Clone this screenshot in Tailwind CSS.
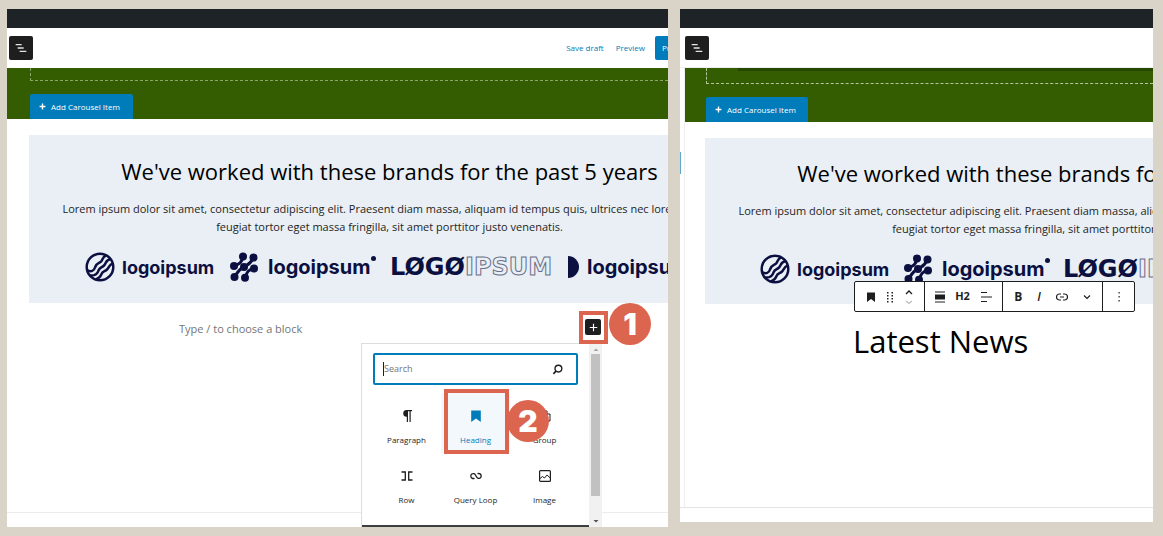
<!DOCTYPE html>
<html lang="en">
  <head>
    <meta charset="UTF-8" />
    <meta name="viewport" content="width=device-width, initial-scale=1.0" />
    <title>Add a heading block</title>
    <script src="https://cdn.jsdelivr.net/npm/@tailwindcss/browser@4"></script>
  </head>
  <body class="bg-[#dad3c8] font-['Open_Sans','Noto_Sans',sans-serif] text-[#1e1e1e]">
    <!-- Shared icons -->
    <svg class="hidden">
      <symbol id="list-view" viewBox="0 0 24 24">
        <path d="M4 7h9M7 12h9M10 17h10" fill="none" stroke="#e4e4e4" stroke-width="2" />
      </symbol>
      <symbol id="plus" viewBox="0 0 12 12">
        <path d="M6 1v10M1 6h10" fill="none" stroke="currentColor" stroke-width="2.4" />
      </symbol>
      <symbol id="bookmark" viewBox="0 0 10 10">
        <path d="M1 .500h8v9.500L5 7 1 10z" fill="currentColor" />
      </symbol>
      <symbol id="logo-waves" viewBox="0 0 30 30">
        <g fill="none" stroke="#0b1040" stroke-width="2.5">
          <circle cx="15" cy="15" r="13.300" />
          <path d="M2.500 18.500C6 20 9 19 10 15.500C11.500 11 13 11.500 15.500 10C18 8.500 17 5 21 3.500" />
          <path d="M5 23.500C10 24 12.500 22 13.500 18.500C14.500 15.500 17 15.500 19 13.500C21.500 11 20 8.500 25.500 7" />
          <path d="M10.500 27.500C14.500 26.500 15.500 24.500 16.500 22C17.500 19 20 19.500 22 17.500C24 15.500 24 12.500 28 11.500" />
        </g>
      </symbol>
      <symbol id="logo-dots" viewBox="0 0 30 30">
        <g fill="#0b1040">
          <circle cx="14" cy="4.500" r="4" />
          <circle cx="24.500" cy="5.500" r="4" />
          <circle cx="5" cy="14" r="4" />
          <circle cx="15" cy="15" r="4" />
          <circle cx="25" cy="16.500" r="4" />
          <circle cx="5.500" cy="25" r="4" />
          <circle cx="16" cy="25.800" r="4" />
        </g>
        <path d="M14 4.500C13 11 10 12 5 14M24.500 5.500C21 13 19 12 15 15C10 17 9 20 5.500 25M25 16.500C19 17.500 18 20 16 25.800" fill="none" stroke="#0b1040" stroke-width="3" />
      </symbol>
    </svg>

    <main class="grid h-screen grid-cols-[661fr_473fr] gap-3 pt-[9px] pr-[10px] pb-[9px] pl-[7px]">
      <!-- Step one: block picker -->
      <section class="relative flex min-w-0 flex-col overflow-hidden bg-white">
        <div class="h-[19px] shrink-0 bg-[#1d2327]"></div>
        <header class="flex h-10 shrink-0 items-center justify-between pl-0.5">
          <button aria-label="List view" class="flex size-6 items-center justify-center rounded-xs bg-[#1e1e1e] text-white">
            <svg class="size-4"><use href="#list-view" /></svg>
          </button>
          <div class="flex items-center gap-[10px] text-[8px] text-[#007cba]">
            <button class="mr-0.5">Save draft</button>
            <button>Preview</button>
            <button class="h-6 w-[13px] overflow-hidden rounded-l-xs bg-[#007cba] pl-[7px] text-white">Publish</button>
          </div>
        </header>
        <div class="flex h-[51px] shrink-0 flex-col justify-between bg-[#335d00] pl-[23px]">
          <div class="h-[13px] border-b border-l border-dashed border-[#8ca56b]"></div>
          <button class="flex h-[25px] w-[103px] items-center gap-[5px] rounded-t-xs bg-[#007cba] pl-[9px] text-[8px] text-white">
            <svg class="size-[7px]"><use href="#plus" /></svg>Add Carousel Item
          </button>
        </div>
        <div class="mt-4 ml-[22px] h-[168px] w-[721px] shrink-0 bg-[#e9eff5] pt-5 text-center">
          <h1 class="text-[22px] leading-8 whitespace-nowrap text-black">We've worked with these brands for the past 5 years</h1>
          <p class="mt-[13px] text-[11px] leading-[18px] whitespace-nowrap">
            Lorem ipsum dolor sit amet, consectetur adipiscing elit. Praesent diam massa, aliquam id tempus quis, ultrices nec lorem. Fusce<br />feugiat tortor eget massa fringilla, sit amet porttitor justo venenatis.
          </p>
          <div class="mt-4 flex h-[30px] items-center pl-14 font-['Inter',sans-serif] font-bold text-[#0b1040]">
            <svg class="size-[30px] shrink-0"><use href="#logo-waves" /></svg>
            <span class="ml-[7px] w-[107px] shrink-0 text-left text-[18px]">logoipsum</span>
            <svg class="size-[30px] shrink-0"><use href="#logo-dots" /></svg>
            <span class="ml-[9px] flex w-[122px] shrink-0 text-left text-[20px]">logoipsum<i class="mt-1 size-[5px] rounded-full bg-[#0b1040]"></i></span>
            <span class="flex w-[178px] shrink-0 font-['DejaVu_Sans',sans-serif] text-[24px]">LØGØ<span class="text-[#e9eff5] [-webkit-text-stroke:1px_#6a7088]">IPSUM</span></span>
            <i class="h-[22px] w-[11px] shrink-0 rounded-r-full bg-[#0b1040]"></i>
            <span class="ml-2 text-[20px]">logoipsum</span>
          </div>
        </div>
        <div class="flex h-12 shrink-0 items-center pr-[67px] pl-[172px]">
          <input aria-label="Block content" placeholder="Type / to choose a block" class="mt-1 min-w-0 flex-1 text-[11px] placeholder:text-[#757575]" />
          <button aria-label="Add block" class="flex size-4 items-center justify-center rounded-xs bg-[#1e1e1e] text-white">
            <svg viewBox="0 0 12 12" class="size-[9px]"><path d="M6 1v10M1 6h10" stroke="currentColor" stroke-width="1.500" /></svg>
          </button>
        </div>
        <footer class="mt-auto h-[15px] shrink-0 border-t border-[#ececec]"></footer>

        <!-- Inserter popover -->
        <div class="absolute top-[334px] bottom-0 left-[354px] flex w-[241px] border-t border-l border-[#ddd] bg-white">
          <div class="flex-1 border-b-2 border-[#3c3f3f]">
            <label class="mx-[11px] mt-[9px] flex h-8 items-center rounded-xs border-2 border-[#007cba] px-2">
              <input aria-label="Search" placeholder="Search" class="w-0 flex-1 border-l border-[#1e1e1e] text-[9px] placeholder:text-[#757575]" />
              <svg viewBox="0 0 12 12" class="mr-[5px] size-[11px]"><circle cx="7" cy="5" r="3.700" fill="none" stroke="currentColor" stroke-width="1.500" /><path d="M4.400 7.800 1.500 10.800" stroke="currentColor" stroke-width="1.800" /></svg>
            </label>
            <div class="mx-[10px] mt-2 grid grid-cols-3 text-[8px] text-[#1e1e1e]">
              <button class="flex h-[60px] flex-col items-center justify-center gap-3 pt-[10px]">
                <svg viewBox="0 0 12 12" class="size-3"><path d="M5.500 0H11v1.300H9.700V12H8.500V1.300H7V12H5.800V6.800A3.400 3.400 0 0 1 5.500 0z" fill="currentColor" /></svg>Paragraph
              </button>
              <button class="flex h-[60px] flex-col items-center justify-center gap-3 bg-[#f3f8fc] pt-[10px] text-[#007cba]">
                <svg class="size-3"><use href="#bookmark" /></svg>Heading
              </button>
              <button class="flex h-[60px] flex-col items-center justify-center gap-3 pt-[10px]">
                <svg viewBox="0 0 12 12" class="size-3"><path d="M1 1h7v7H1zM4 4h7v7H4z" fill="none" stroke="currentColor" /></svg>Group
              </button>
              <button class="flex h-[60px] flex-col items-center justify-center gap-3 pt-[10px]">
                <svg viewBox="0 0 12 12" class="size-3"><path d="M.500 2H4.300V10H.500M11.500 2H7.700V10H11.500" fill="none" stroke="currentColor" stroke-width="1.300" /></svg>Row
              </button>
              <button class="flex h-[60px] flex-col items-center justify-center gap-3 pt-[10px]">
                <svg viewBox="0 0 12 12" class="size-3"><path d="M4.500 8.300C2.500 9 .800 7.800.800 6S2.500 3.300 4 3.700C6 4.300 6 7.700 8 8.300C9.500 8.700 11.200 7.800 11.200 6S9.500 3 7.500 3.700" fill="none" stroke="currentColor" stroke-width="1.300" /></svg>Query Loop
              </button>
              <button class="flex h-[60px] flex-col items-center justify-center gap-3 pt-[10px]">
                <svg viewBox="0 0 12 12" class="size-3"><rect x=".600" y=".600" width="10.800" height="10.800" rx="1" fill="none" stroke="currentColor" stroke-width="1.200" /><path d="M1 8.500 3.500 6.500 5.500 8 8 5 11 7.800" fill="none" stroke="currentColor" /></svg>Image
              </button>
            </div>
          </div>
          <div class="flex w-[13px] flex-col items-center bg-[#f1f1f1]">
            <svg viewBox="0 0 10 10" class="h-[10px] w-[10px] text-[#a3a3a3]"><path d="M2.500 7 5 4.500 7.500 7z" fill="currentColor" /></svg>
            <div class="h-[142px] w-[9px] bg-[#c1c1c1]"></div>
            <svg viewBox="0 0 10 10" class="mt-auto h-[10px] w-[10px] text-[#505050]"><path d="M2.500 3 5 5.500 7.500 3z" fill="currentColor" /></svg>
          </div>
        </div>

        <!-- Step markers -->
        <div class="absolute top-[302px] left-[572px] h-[33px] w-[29px] border-4 border-[#dc654f]"></div>
        <div class="absolute top-[294px] left-[602px] flex size-[42px] items-center justify-center rounded-full bg-[#dc654f] font-['Inter',sans-serif] text-[30px] leading-none font-black text-white">1</div>
        <div class="absolute top-[380px] left-[437px] size-[65px] border-4 border-[#dc654f]"></div>
        <div class="absolute top-[391px] left-[500px] flex size-[42px] items-center justify-center rounded-full bg-[#dc654f] font-['Inter',sans-serif] text-[30px] leading-none font-black text-white">2</div>
      </section>

      <!-- Step two: inserted heading -->
      <section class="relative mb-[5px] flex min-w-0 flex-col overflow-hidden bg-white">
        <div class="h-[19px] shrink-0 bg-[#1d2327]"></div>
        <header class="flex h-10 shrink-0 items-center border-b border-[#eee] pl-[5px]">
          <button aria-label="List view" class="flex size-6 items-center justify-center rounded-xs bg-[#1e1e1e] text-white">
            <svg class="size-4"><use href="#list-view" /></svg>
          </button>
        </header>
        <div class="ml-1 flex-1 border-l border-[#eee]">
          <div class="flex h-[54px] flex-col justify-between bg-[#335d00] pl-[21px]">
            <div class="h-4 border-b border-l border-dashed border-[#b4c79c]">
              <div class="ml-[31px] h-[3px] bg-[#264700]"></div>
            </div>
            <button class="flex h-[25px] w-[102px] items-center gap-[5px] rounded-t-xs bg-[#007cba] pl-[9px] text-[8px] text-white">
              <svg class="size-[7px]"><use href="#plus" /></svg>Add Carousel Item
            </button>
          </div>
          <div class="mt-4 ml-5 h-[166px] w-[721px] bg-[#e9eff5] pt-[19px] text-center">
            <h1 class="text-[22px] leading-8 whitespace-nowrap text-black">We've worked with these brands for the past 5 years</h1>
            <p class="mt-[13px] text-[11px] leading-[18px] whitespace-nowrap">
              Lorem ipsum dolor sit amet, consectetur adipiscing elit. Praesent diam massa, aliquam id tempus quis, ultrices nec lorem. Fusce<br />feugiat tortor eget massa fringilla, sit amet porttitor justo venenatis.
            </p>
            <div class="mt-4 flex h-[30px] items-center pl-[55px] font-['Inter',sans-serif] font-bold text-[#0b1040]">
              <svg class="size-[30px] shrink-0"><use href="#logo-waves" /></svg>
              <span class="ml-[7px] w-[106px] shrink-0 text-left text-[18px]">logoipsum</span>
              <svg class="size-[30px] shrink-0"><use href="#logo-dots" /></svg>
              <span class="ml-[9px] flex w-[121px] shrink-0 text-left text-[20px]">logoipsum<i class="mt-1 size-[5px] rounded-full bg-[#0b1040]"></i></span>
              <span class="flex w-[178px] shrink-0 font-['DejaVu_Sans',sans-serif] text-[24px]">LØGØ<span class="text-[#e9eff5] [-webkit-text-stroke:1px_#6a7088]">IPSUM</span></span>
            </div>
          </div>
          <h2 class="mt-[14px] ml-[168px] text-[31px] leading-[46px] whitespace-nowrap text-black">Latest News</h2>
        </div>
        <footer class="h-[15px] shrink-0 border-t border-[#e4e4e4]"></footer>
        <div class="absolute top-[143px] left-0 h-[22px] w-px bg-[#5fa8cf]"></div>

        <!-- Block toolbar -->
        <div role="toolbar" class="absolute top-[272px] left-[174px] flex h-[31px] w-[281px] divide-x divide-[#1e1e1e] rounded-xs border border-[#1e1e1e] bg-white">
          <div class="flex w-[70px] items-center justify-center gap-[9px]">
            <button aria-label="Heading"><svg class="block size-[10px]"><use href="#bookmark" /></svg></button>
            <button aria-label="Drag">
              <svg viewBox="0 0 10 12" class="block h-3 w-[10px]"><path d="M2 1h1.500v1.500H2zM6.500 1H8v1.500H6.500zM2 4H3.500v1.500H2zM6.500 4H8v1.500H6.500zM2 7H3.500v1.500H2zM6.500 7H8v1.500H6.500zM2 10H3.500v1.500H2zM6.500 10H8v1.500H6.500z" fill="currentColor" /></svg>
            </button>
            <button aria-label="Move">
              <svg viewBox="0 0 10 16" class="block h-4 w-[10px]" fill="none" stroke-width="1.300"><path d="M2 5 5 2 8 5" stroke="#1e1e1e" /><path d="M2 12 5 14.500 8 12" stroke="#bbb" /></svg>
            </button>
          </div>
          <div class="flex w-[78px] items-center justify-center gap-[10px]">
            <button aria-label="Align">
              <svg viewBox="0 0 10 12" class="block h-3 w-[10px]"><path d="M0 1H10M0 11H10" stroke="currentColor" /><path d="M0 3.500H10V8.500H0z" fill="currentColor" /></svg>
            </button>
            <button class="text-[11px] font-bold">H2</button>
            <button aria-label="Align text">
              <svg viewBox="0 0 12 12" class="block size-3"><path d="M1 1.500H7M1 6H12M1 10.500H7" stroke="currentColor" stroke-width="1.200" /></svg>
            </button>
          </div>
          <div class="flex w-[100px] items-center justify-center gap-[15px]">
            <button class="text-[12px] font-bold">B</button>
            <button class="text-[12px] font-semibold italic">I</button>
            <button aria-label="Link">
              <svg viewBox="0 0 12 8" class="block h-2 w-3"><path d="M5 1H3.500a3 3 0 0 0 0 6H5M7 1h1.500a3 3 0 0 1 0 6H7M4 4h4" fill="none" stroke="currentColor" stroke-width="1.200" /></svg>
            </button>
            <button aria-label="More">
              <svg viewBox="0 0 8 8" class="block size-2"><path d="M1 2.500 4 5.500 7 2.500" fill="none" stroke="currentColor" stroke-width="1.200" /></svg>
            </button>
          </div>
          <div class="flex flex-1 items-center justify-center">
            <button aria-label="Options">
              <svg viewBox="0 0 4 12" class="block h-3 w-1"><path d="M1.500 1h1.200v1.500H1.500zM1.500 5h1.200v1.500H1.500zM1.500 9h1.200v1.500H1.500z" fill="currentColor" /></svg>
            </button>
          </div>
        </div>
      </section>
    </main>
  </body>
</html>
